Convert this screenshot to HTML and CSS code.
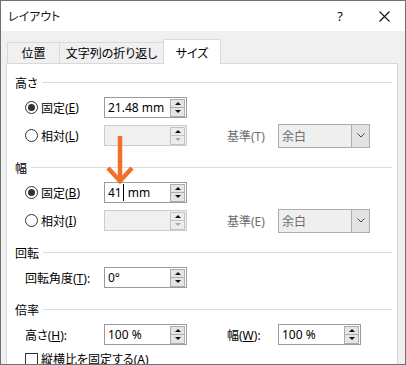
FILE: index.html
```html
<!DOCTYPE html>
<html lang="ja">
<head>
    <meta charset="UTF-8">
    <title>レイアウト</title>
    <link rel="stylesheet" href="styles.css">
</head>
<body>

<div class="window">

    <div class="titlebar">
        <span class="title">レイアウト</span>
        <span class="help">?</span>
        <span class="close">
            <svg width="11" height="11" viewBox="0 0 11 11"><path d="M0.5 0.5 L10.5 10.5 M10.5 0.5 L0.5 10.5" stroke="#111" stroke-width="1.1" fill="none"/></svg>
        </span>
    </div>

    <div class="tabs">
        <div class="tab tab1">位置</div>
        <div class="tab tab2">文字列の折り返し</div>
        <div class="tab tab3 active">サイズ</div>
    </div>

    <div class="panel">

        <!-- 高さ -->
        <div class="group">
            <div class="heading"><span>高さ</span></div>
            <div class="rows">
                <div class="row">
                    <label class="opt"><span class="radio on"></span>固定(<u>E</u>)</label>
                    <div class="spin"><span>21.48 mm</span><div class="btns"><span class="up"></span><span class="down"></span></div></div>
                </div>
                <div class="row">
                    <label class="opt"><span class="radio"></span>相対(<u>L</u>)</label>
                    <div class="spin off"><span></span><div class="btns"><span class="up"></span><span class="down"></span></div></div>
                    <span class="side off">基準(T)</span>
                    <div class="select"><span>余白</span><span class="drop"><svg width="8" height="5" viewBox="0 0 8 5"><path d="M0.5 0.5 L4 4 L7.5 0.5" stroke="#444" fill="none"/></svg></span></div>
                </div>
            </div>
        </div>

        <!-- 幅 -->
        <div class="group">
            <div class="heading"><span>幅</span></div>
            <div class="rows">
                <div class="row">
                    <label class="opt"><span class="radio on"></span>固定(<u>B</u>)</label>
                    <div class="spin"><span>41</span><span class="caret"></span><span>mm</span><div class="btns"><span class="up"></span><span class="down"></span></div></div>
                </div>
                <div class="row">
                    <label class="opt"><span class="radio"></span>相対(<u>I</u>)</label>
                    <div class="spin off"><span></span><div class="btns"><span class="up"></span><span class="down"></span></div></div>
                    <span class="side off">基準(E)</span>
                    <div class="select"><span>余白</span><span class="drop"><svg width="8" height="5" viewBox="0 0 8 5"><path d="M0.5 0.5 L4 4 L7.5 0.5" stroke="#444" fill="none"/></svg></span></div>
                </div>
            </div>
        </div>

        <!-- 回転 -->
        <div class="group">
            <div class="heading"><span>回転</span></div>
            <div class="rows">
                <div class="row">
                    <span class="lbl">回転角度(<u>T</u>):</span>
                    <div class="spin"><span>0°</span><div class="btns"><span class="up"></span><span class="down"></span></div></div>
                </div>
            </div>
        </div>

        <!-- 倍率 -->
        <div class="group">
            <div class="heading"><span>倍率</span></div>
            <div class="rows">
                <div class="row">
                    <span class="lbl">高さ(<u>H</u>):</span>
                    <div class="spin"><span>100 %</span><div class="btns"><span class="up"></span><span class="down"></span></div></div>
                    <span class="side">幅(<u>W</u>):</span>
                    <div class="spin right"><span>100 %</span><div class="btns"><span class="up"></span><span class="down"></span></div></div>
                </div>
                <label class="check"><span class="box"></span>縦横比を固定する(<u>A</u>)</label>
            </div>
        </div>

    </div>

    <!-- flèche orange par-dessus -->
    <svg class="arrow" width="40" height="60" viewBox="0 0 40 60">
        <path d="M20 6 L20 50" stroke="#f0712c" stroke-width="4.5" fill="none"/>
        <path d="M8 38 L20 51 L32 38" stroke="#f0712c" stroke-width="4.5" fill="none" stroke-linejoin="miter"/>
    </svg>

</div>

</body>
</html>
```

FILE: styles.css
```css
* { box-sizing: border-box; }

body
{
    margin: 0;
    font-family: "Noto Sans", "Noto Sans CJK JP", sans-serif;
    font-size: 12px;
    color: #000;
    font-feature-settings: "palt";
}

u { text-decoration: underline; text-underline-offset: 1px; }

/* Fenêtre */
.window
{
    position: relative;
    width: 406px;
    height: 365px;
    border: 1px solid #707070;
    background: #f0f0f0;
    display: flex;
    flex-direction: column;
    overflow: hidden;
}

.titlebar { height: 30px; background: #fff; display: flex; align-items: center; flex-shrink: 0; }
.title { padding-left: 7px; color: #1a1a1a; }
.help { margin-left: auto; width: 46px; text-align: center; font-size: 13px; font-family: "Open Sans", sans-serif; }
.close { width: 42px; display: flex; justify-content: center; }

/* Onglets */
.tabs { display: flex; align-items: flex-end; height: 25px; margin: 8px 0 -1px 6px; flex-shrink: 0; }
.tab
{
    height: 22px;
    border: 1px solid #d9d9d9;
    border-bottom: none;
    margin-left: -1px;
    display: flex;
    align-items: center;
    justify-content: center;
    padding-bottom: 1px;
}
.tab1 { width: 53px; margin-left: 0; }
.tab2 { width: 105px; }
.tab3 { width: 58px; }
.tab.active { height: 25px; background: #fff; position: relative; z-index: 1; padding-bottom: 0; padding-top: 1px; }

/* Panneau */
.panel
{
    flex: 1;
    background: #fff;
    border: 1px solid #d9d9d9;
    border-bottom: none;
    margin: 0 7px 0 5px;
    padding: 11px 5px 0 8px;
    overflow: hidden;
}

.group + .group { margin-top: 14px; }

.heading { display: flex; align-items: center; height: 16px; margin-bottom: 6px; }
.heading::after { content: ""; flex: 1; height: 1px; background: #dcdcdc; margin: -2px 0 0 4px; }

.rows { padding-left: 10px; display: flex; flex-direction: column; gap: 7px; }

.row
{
    display: grid;
    grid-template-columns: 79px 83px 40px 51px 92px;
    grid-template-rows: 21px;
    align-items: center;
}

.opt, .check { display: flex; align-items: center; }

.radio
{
    width: 13px; height: 13px;
    border: 1px solid #333;
    border-radius: 50%;
    margin-right: 3px;
    display: flex; align-items: center; justify-content: center;
}
.radio.on::after { content: ""; width: 7px; height: 7px; border-radius: 50%; background: #333; }

/* Champs numériques */
.spin
{
    height: 21px;
    border: 1px solid #9a9a9a;
    background: #fff;
    display: flex;
    align-items: center;
    padding-left: 3px;
}
.spin.right { grid-column: 5; width: 83px; }
.spin.off { background: #f0f0f0; border-color: #cccccc; }

.caret { width: 1px; height: 17px; background: #000; margin: 0 4px 0 1px; }

.btns { margin-left: auto; margin-right: 1px; display: flex; flex-direction: column; }
.btns span
{
    width: 15px;
    border: 1px solid #adadad;
    background: #e5e5e5;
    display: flex; align-items: center; justify-content: center;
}
.btns .up { height: 9px; }
.btns .down { height: 10px; margin-top: -1px; }
.btns .up::before, .btns .down::before
{
    content: "";
    width: 0; height: 0;
    border-left: 3px solid transparent;
    border-right: 3px solid transparent;
}
.btns .up::before { border-bottom: 3px solid #111; }
.btns .down::before { border-top: 3px solid #111; }
.off .btns span { background: #ececec; border-color: #c4c4c4; }
.off .btns .down::before { border-top-color: #a8a8a8; }

.side { grid-column: 4; }
.side.off { color: #6d6d6d; }

/* Liste déroulante */
.select
{
    grid-column: 5;
    height: 24px;
    border: 1px solid #adadad;
    background: #efefef;
    display: flex;
    align-items: center;
    padding-left: 3px;
    color: #6d6d6d;
}
.drop
{
    margin-left: auto;
    width: 18px;
    height: 100%;
    border-left: 1px solid #adadad;
    background: #e3e3e3;
    display: flex; align-items: center; justify-content: center;
}

.check { height: 14px; }
.box { width: 13px; height: 13px; border: 1px solid #333; margin-right: 3px; flex-shrink: 0; }

.arrow { position: absolute; left: 99px; top: 129px; }
```
